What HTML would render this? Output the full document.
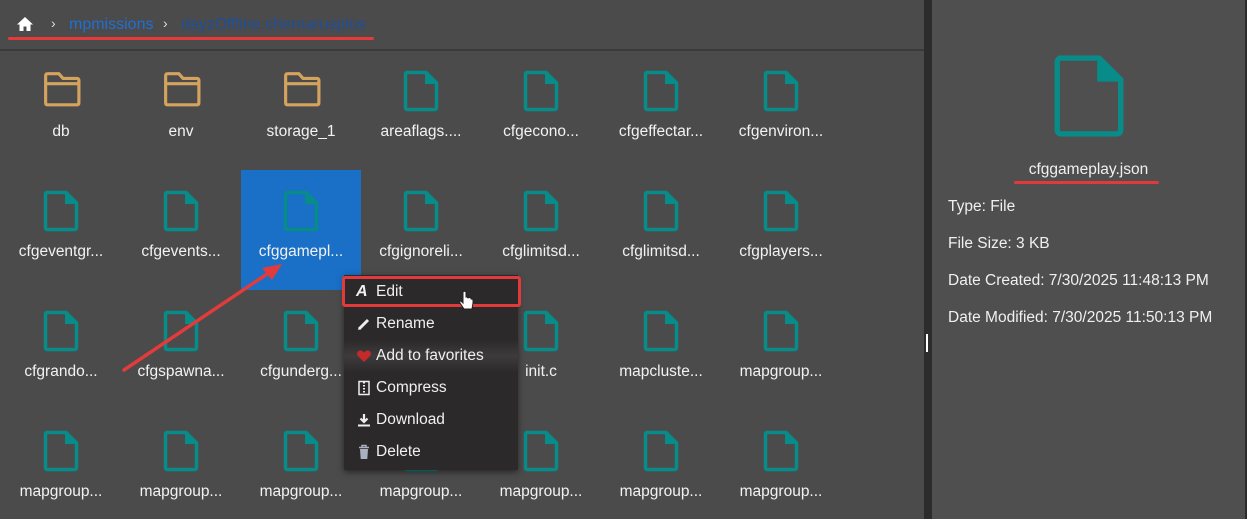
<!DOCTYPE html>
<html style="overflow:hidden;width:1247px;height:519px"><head><meta charset="utf-8"><style>
*{margin:0;padding:0;box-sizing:border-box}
body{width:1247px;height:519px;overflow:hidden;background:#4a4a4a;font-family:"Liberation Sans",sans-serif;position:relative;color:#fff}
svg{display:block}
.left{position:absolute;left:0;top:0;width:924px;height:519px;background:#4b4b4b}
.hdr{position:absolute;left:0;top:49px;width:924px;height:2px;background:#3a3a3a}
.div{position:absolute;left:924px;top:0;width:8px;height:519px;background:#2c2c2c}
.right{position:absolute;left:932px;top:0;width:313px;height:519px;background:#4f4f4f}
.edge{position:absolute;left:1245px;top:0;width:2px;height:519px;background:#2c2c2c}
.cell{position:absolute;width:120px;height:120px}
.cell svg{position:absolute;left:42px;top:19px}
.cell .l{position:absolute;left:0;width:120px;top:72px;text-align:center;font-size:15.5px;color:#f2f2f2}
.sel{background:#1a6fc6}
.menu{position:absolute;left:344px;top:275px;width:174px;height:195px;background:#2b2929;box-shadow:0 2px 6px rgba(0,0,0,.5);overflow:hidden}
.mi{position:absolute;left:0;width:174px;height:32px;font-size:15.5px;line-height:32px;padding-left:32px;color:#f0f0f0}
.mi i{position:absolute;left:12px;top:8px;width:16px;height:16px;font-style:normal;display:block}
.info{position:absolute;left:948px;font-size:15.5px;color:#f0f0f0}
</style></head><body>
<svg width="0" height="0" style="position:absolute">
<defs>
<symbol id="f" viewBox="0 0 36 42"><path d="M3 2.5H23L33.5 13V37.5Q33.5 39.5 31.5 39.5H4.5Q2.5 39.5 2.5 37.5V4.5Q2.5 2.5 4.5 2.5Z" fill="none" stroke="#078c8a" stroke-width="3.5"/><path d="M22 1V14H35Z" fill="#078c8a"/></symbol>
<symbol id="d" viewBox="0 0 36 34"><path d="M2.5 4.5Q2.5 2.5 4.5 2.5H15L19 7H32Q34 7 34 9V30Q34 32 32 32H4.5Q2.5 32 2.5 30Z" fill="none" stroke="#d4a35e" stroke-width="3"/><path d="M2.5 12H34" stroke="#d4a35e" stroke-width="3"/></symbol>
</defs></svg>
<div class="left"></div>
<div class="hdr"></div>
<div class="div"></div>
<div class="right"></div>
<div class="edge"></div>
<div style="position:absolute;left:926px;top:334px;width:2px;height:18px;background:#fff"></div>

<svg style="position:absolute;left:16px;top:16px" width="18" height="16" viewBox="0 0 18 16"><path d="M9 1L1 8.5H3.5V15H7.5V10.5H10.5V15H14.5V8.5H17Z" fill="#fff"/></svg>
<div style="position:absolute;left:51px;top:15px;font-size:14px;color:#ddd">›</div>
<div style="position:absolute;left:69px;top:16px;font-size:16px;color:#1f6fd6">mpmissions</div>
<div style="position:absolute;left:163px;top:15px;font-size:14px;color:#ddd">›</div>
<div style="position:absolute;left:181px;top:16px;font-size:16px;color:#1d4f9a">dayzOffline.chernarusplus</div>
<div style="position:absolute;left:8px;top:37px;width:366px;height:3px;border-radius:2px;background:#e63a3a"></div>

<div class="cell" style="left:1px;top:51px"><svg width="38" height="36" style="top:20px"><use href="#d"/></svg><div class="l">db</div></div>
<div class="cell" style="left:121px;top:51px"><svg width="38" height="36" style="top:20px"><use href="#d"/></svg><div class="l">env</div></div>
<div class="cell" style="left:241px;top:51px"><svg width="38" height="36" style="top:20px"><use href="#d"/></svg><div class="l">storage_1</div></div>
<div class="cell" style="left:361px;top:51px"><svg width="36" height="42"><use href="#f"/></svg><div class="l">areaflags....</div></div>
<div class="cell" style="left:481px;top:51px"><svg width="36" height="42"><use href="#f"/></svg><div class="l">cfgecono...</div></div>
<div class="cell" style="left:601px;top:51px"><svg width="36" height="42"><use href="#f"/></svg><div class="l">cfgeffectar...</div></div>
<div class="cell" style="left:721px;top:51px"><svg width="36" height="42"><use href="#f"/></svg><div class="l">cfgenviron...</div></div>

<div class="cell" style="left:1px;top:171px"><svg width="36" height="42"><use href="#f"/></svg><div class="l">cfgeventgr...</div></div>
<div class="cell" style="left:121px;top:171px"><svg width="36" height="42"><use href="#f"/></svg><div class="l">cfgevents...</div></div>
<div class="cell sel" style="left:241px;top:170px"><svg width="36" height="42" style="top:20px"><use href="#f"/></svg><div class="l" style="top:73px">cfggamepl...</div></div>
<div class="cell" style="left:361px;top:171px"><svg width="36" height="42"><use href="#f"/></svg><div class="l">cfgignoreli...</div></div>
<div class="cell" style="left:481px;top:171px"><svg width="36" height="42"><use href="#f"/></svg><div class="l">cfglimitsd...</div></div>
<div class="cell" style="left:601px;top:171px"><svg width="36" height="42"><use href="#f"/></svg><div class="l">cfglimitsd...</div></div>
<div class="cell" style="left:721px;top:171px"><svg width="36" height="42"><use href="#f"/></svg><div class="l">cfgplayers...</div></div>

<div class="cell" style="left:1px;top:291px"><svg width="36" height="42"><use href="#f"/></svg><div class="l">cfgrando...</div></div>
<div class="cell" style="left:121px;top:291px"><svg width="36" height="42"><use href="#f"/></svg><div class="l">cfgspawna...</div></div>
<div class="cell" style="left:241px;top:291px"><svg width="36" height="42"><use href="#f"/></svg><div class="l">cfgunderg...</div></div>
<div class="cell" style="left:361px;top:291px"><svg width="36" height="42"><use href="#f"/></svg><div class="l">init.c</div></div>
<div class="cell" style="left:481px;top:291px"><svg width="36" height="42"><use href="#f"/></svg><div class="l">init.c</div></div>
<div class="cell" style="left:601px;top:291px"><svg width="36" height="42"><use href="#f"/></svg><div class="l">mapcluste...</div></div>
<div class="cell" style="left:721px;top:291px"><svg width="36" height="42"><use href="#f"/></svg><div class="l">mapgroup...</div></div>

<div class="cell" style="left:1px;top:411px"><svg width="36" height="42"><use href="#f"/></svg><div class="l">mapgroup...</div></div>
<div class="cell" style="left:121px;top:411px"><svg width="36" height="42"><use href="#f"/></svg><div class="l">mapgroup...</div></div>
<div class="cell" style="left:241px;top:411px"><svg width="36" height="42"><use href="#f"/></svg><div class="l">mapgroup...</div></div>
<div class="cell" style="left:361px;top:411px"><svg width="36" height="42"><use href="#f"/></svg><div class="l">mapgroup...</div></div>
<div class="cell" style="left:481px;top:411px"><svg width="36" height="42"><use href="#f"/></svg><div class="l">mapgroup...</div></div>
<div class="cell" style="left:601px;top:411px"><svg width="36" height="42"><use href="#f"/></svg><div class="l">mapgroup...</div></div>
<div class="cell" style="left:721px;top:411px"><svg width="36" height="42"><use href="#f"/></svg><div class="l">mapgroup...</div></div>

<div class="menu">
<div class="mi" style="top:1px"><i style="font-weight:bold;font-style:italic;font-size:16px;line-height:16px">A</i>Edit</div>
<div class="mi" style="top:33px"><i><svg width="16" height="16"><path d="M3 13L12 4" stroke="#eee" stroke-width="3"/><path d="M2 14L3 11L5 13Z" fill="#eee"/></svg></i>Rename</div>
<div class="mi" style="top:65px;background:linear-gradient(#2b2929,#3d3b3b 50%,#2b2929)"><i><svg width="16" height="16"><path d="M8 14L2 8Q0 5 2.5 3Q5 1.5 8 4.5Q11 1.5 13.5 3Q16 5 14 8Z" fill="#c42a2a"/></svg></i>Add to favorites</div>
<div class="mi" style="top:97px"><i><svg width="16" height="16"><rect x="3" y="1.5" width="10" height="13" fill="none" stroke="#eee" stroke-width="1.5"/><path d="M8 2V13" stroke="#eee" stroke-width="2" stroke-dasharray="1.5 1.5"/></svg></i>Compress</div>
<div class="mi" style="top:129px"><i><svg width="16" height="16"><path d="M8 2V10M4.5 6.5L8 10L11.5 6.5" stroke="#eee" stroke-width="2.2" fill="none"/><path d="M2 13.5H14" stroke="#eee" stroke-width="2"/></svg></i>Download</div>
<div class="mi" style="top:161px"><i><svg width="16" height="16"><path d="M3 3.5H13M6 3V1.5H10V3" stroke="#aab0c0" stroke-width="1.5" fill="none"/><path d="M4 5H12L11.3 15H4.7Z" fill="#aab0c0"/></svg></i>Delete</div>
</div>
<div style="position:absolute;left:342px;top:276px;width:179px;height:31px;border:3px solid #e23a3a;border-radius:3px"></div>
<svg style="position:absolute;left:458px;top:290px" width="18" height="26" viewBox="0 0 18 26"><path d="M5 2V13L3 11Q1 11 2 13L6 19H14L15 13V10Q15 9 13 9V8Q11 7 10 8Q9 6.5 8 7V2Q6.5 0.5 5 2Z" fill="#fff" stroke="#222" stroke-width="1"/></svg>

<svg style="position:absolute;left:0;top:0" width="924" height="519"><path d="M124 370L270 272" stroke="#e33b3b" stroke-width="3.5" stroke-linecap="round"/><path d="M282 264L262 268L272 280Z" fill="#e33b3b"/></svg>

<svg style="position:absolute;left:1051px;top:53px" width="76" height="86" viewBox="0 0 36 42"><path d="M3 2.5H23L33.5 13V37.5Q33.5 39.5 31.5 39.5H4.5Q2.5 39.5 2.5 37.5V4.5Q2.5 2.5 4.5 2.5Z" fill="none" stroke="#078c8a" stroke-width="2.6"/><path d="M22 1.5V14H34.5Z" fill="#078c8a"/></svg>
<div style="position:absolute;left:932px;width:313px;top:161px;text-align:center;font-size:15.5px;color:#f0f0f0">cfggameplay.json</div>
<div style="position:absolute;left:1014px;top:181px;width:145px;height:3px;border-radius:2px;background:#e23a3a"></div>
<div class="info" style="top:198px">Type: File</div>
<div class="info" style="top:235px">File Size: 3 KB</div>
<div class="info" style="top:272px">Date Created: 7/30/2025 11:48:13 PM</div>
<div class="info" style="top:309px">Date Modified: 7/30/2025 11:50:13 PM</div>
</body></html>
